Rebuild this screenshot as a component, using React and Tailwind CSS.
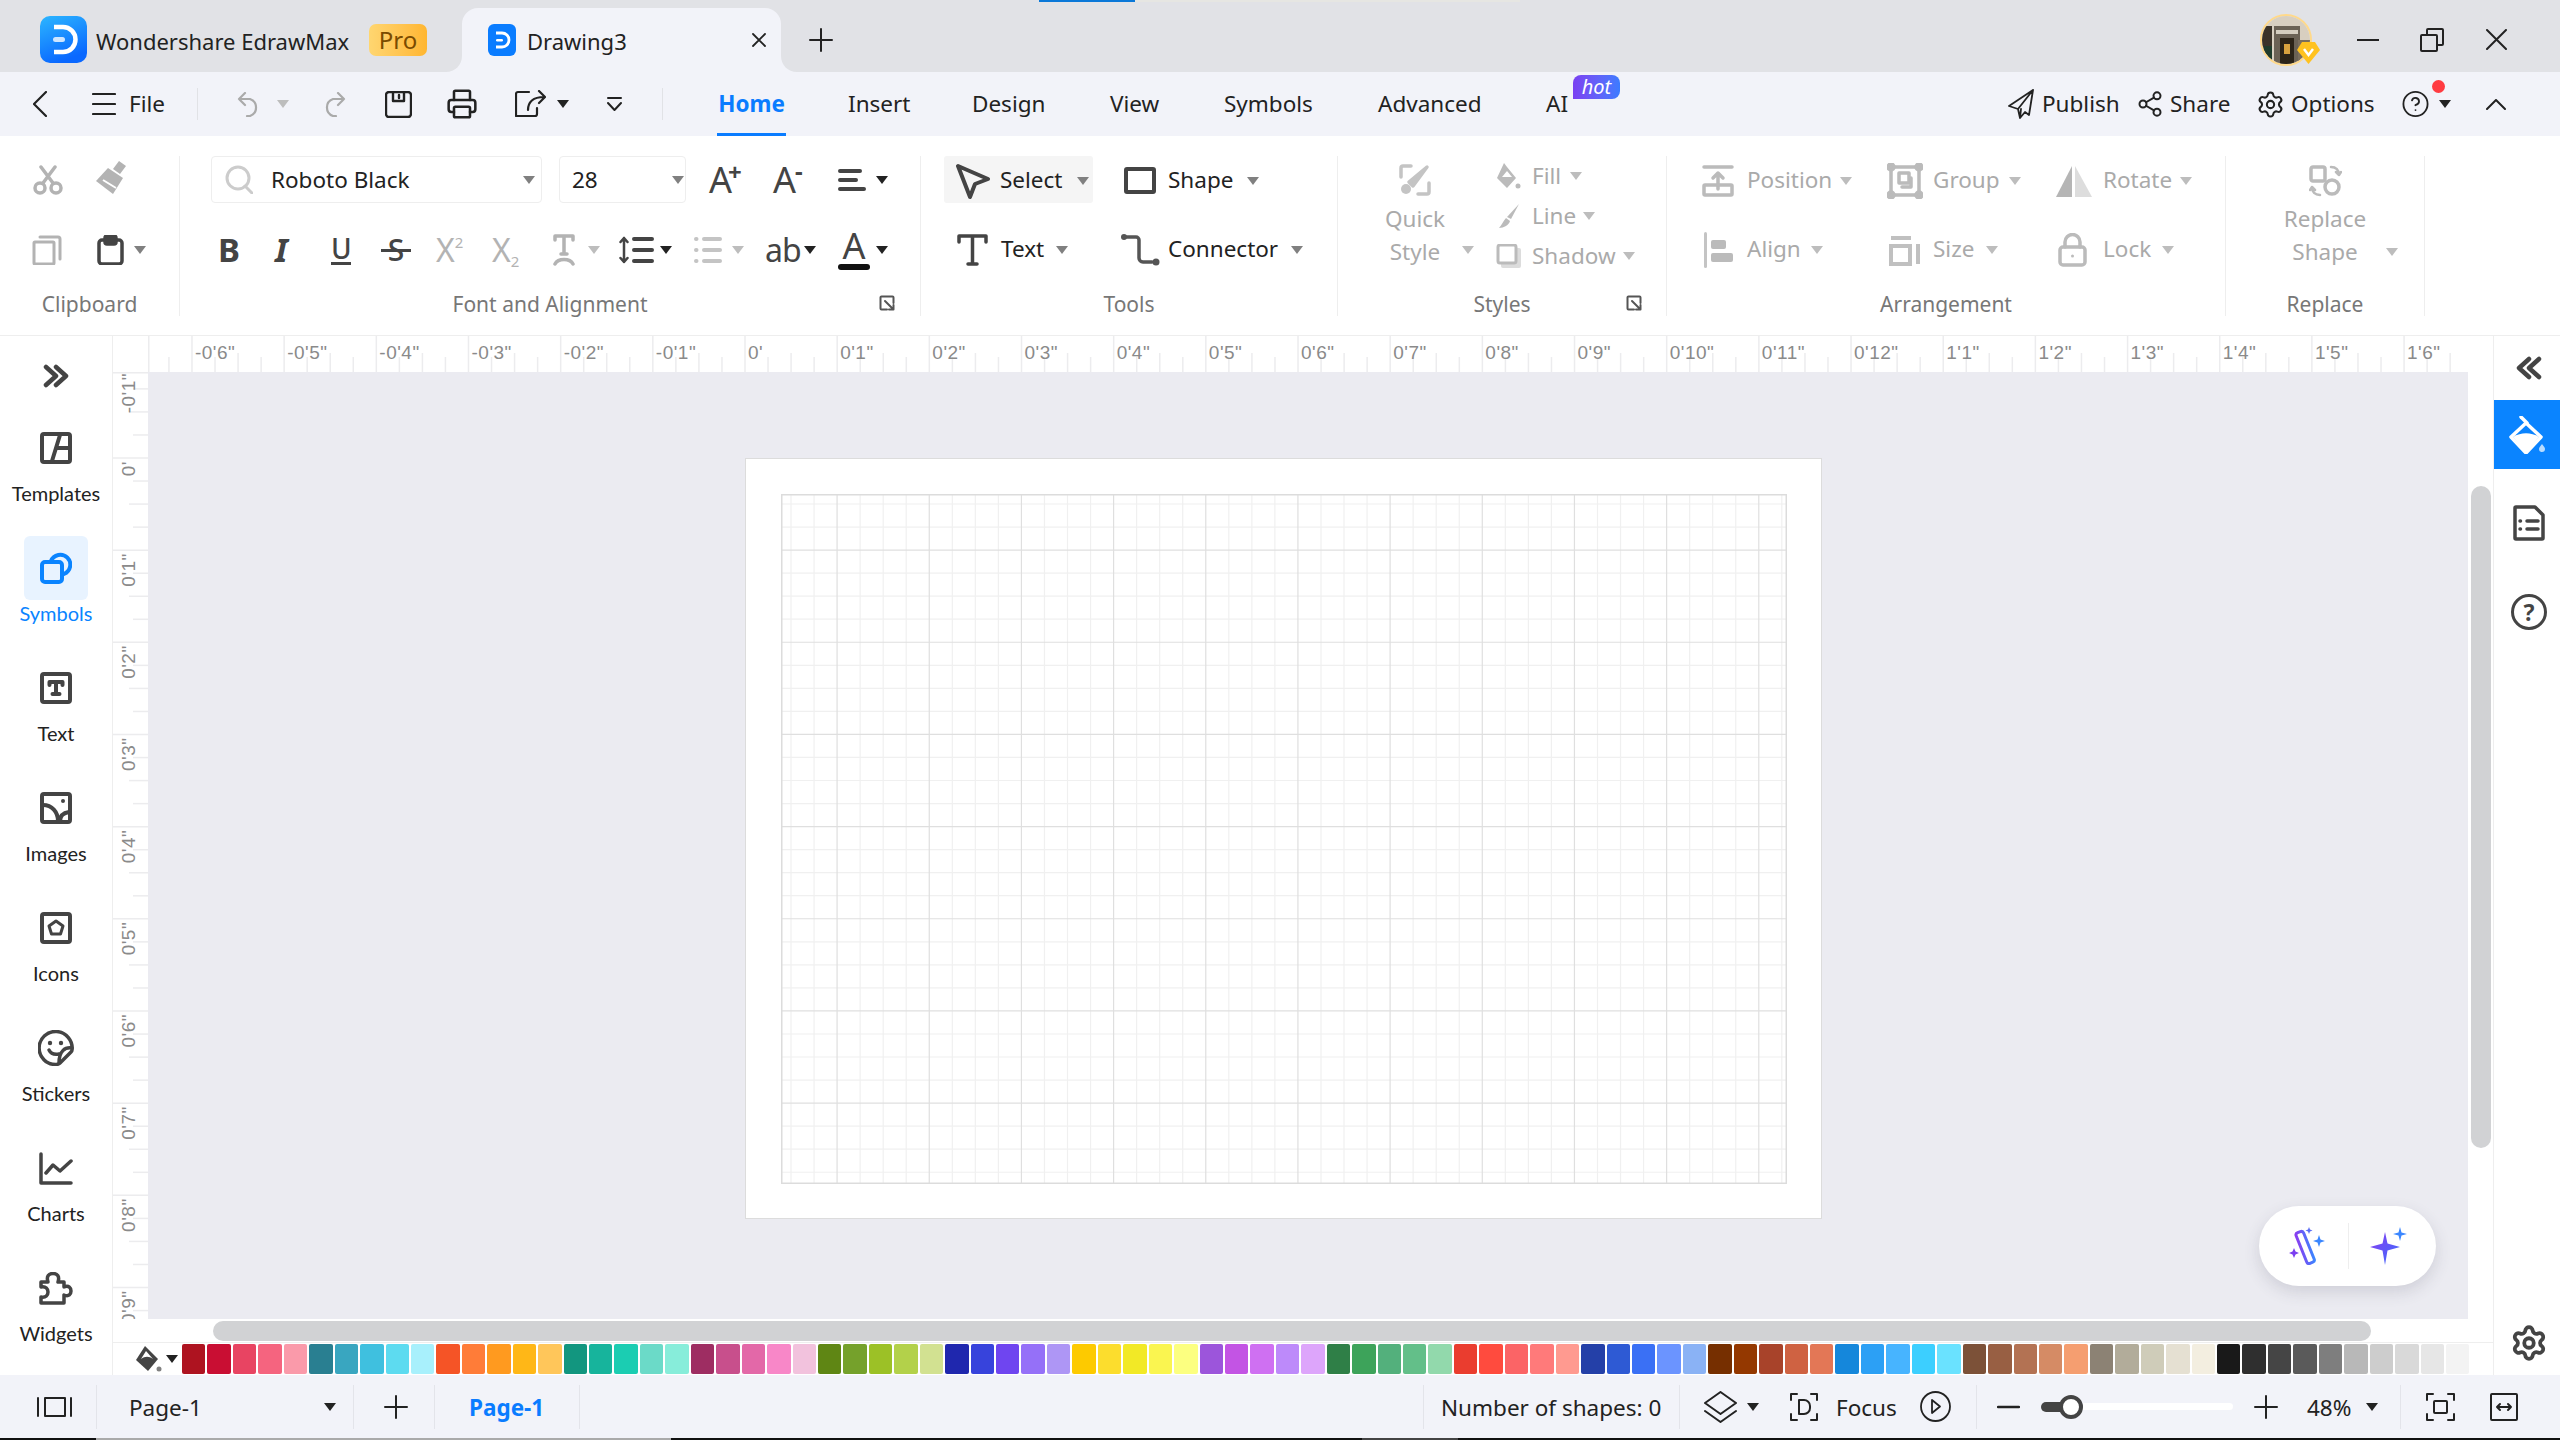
import React from 'react';
import { Settings, Share2, CircleHelp, Printer } from 'lucide-react';

const swatches = [
  'bg-[#ae1320]', 'bg-[#c90e33]', 'bg-[#e84462]', 'bg-[#f5647f]', 'bg-[#fa9aaa]',
  'bg-[#297f91]', 'bg-[#39a6c0]', 'bg-[#3fc0df]', 'bg-[#5ddbf0]', 'bg-[#a8f0fc]',
  'bg-[#f55426]', 'bg-[#ff7c38]', 'bg-[#ff9a1f]', 'bg-[#ffb717]', 'bg-[#ffc65a]',
  'bg-[#12967f]', 'bg-[#17b49c]', 'bg-[#1bcdb2]', 'bg-[#6bdac8]', 'bg-[#87edda]',
  'bg-[#9e2d62]', 'bg-[#c84f8c]', 'bg-[#e368a8]', 'bg-[#f887c8]', 'bg-[#f2c2dd]',
  'bg-[#5f8614]', 'bg-[#75a12b]', 'bg-[#9cc126]', 'bg-[#b3d14a]', 'bg-[#d2e191]',
  'bg-[#1f27ae]', 'bg-[#3743dc]', 'bg-[#6f45f0]', 'bg-[#9570f8]', 'bg-[#ae96f5]',
  'bg-[#fdca00]', 'bg-[#fcdd2d]', 'bg-[#f2e926]', 'bg-[#faf550]', 'bg-[#fcff80]',
  'bg-[#9c55db]', 'bg-[#c354e4]', 'bg-[#cf70f2]', 'bg-[#bd8afa]', 'bg-[#dda5fb]',
  'bg-[#2f7f47]', 'bg-[#3da35a]', 'bg-[#53b07c]', 'bg-[#63bf89]', 'bg-[#92d9ac]',
  'bg-[#ea3d2f]', 'bg-[#ff4b3e]', 'bg-[#fb6466]', 'bg-[#ff7a7a]', 'bg-[#ff9a90]',
  'bg-[#2440a8]', 'bg-[#2e5ad4]', 'bg-[#3a70f5]', 'bg-[#6b94ff]', 'bg-[#8ab2f5]',
  'bg-[#762f00]', 'bg-[#943800]', 'bg-[#a8432a]', 'bg-[#cf6242]', 'bg-[#e37756]',
  'bg-[#1587db]', 'bg-[#2ca0f5]', 'bg-[#47b4ff]', 'bg-[#3ccfff]', 'bg-[#6ae2ff]',
  'bg-[#7c5138]', 'bg-[#985f43]', 'bg-[#b37253]', 'bg-[#d58b65]', 'bg-[#f59e70]',
  'bg-[#8c8274]', 'bg-[#b2ac9a]', 'bg-[#cfccb9]', 'bg-[#e5e0d2]', 'bg-[#f3eee0]',
  'bg-[#191919]', 'bg-[#2f2f2f]', 'bg-[#454545]', 'bg-[#5a5a5a]', 'bg-[#7e7e7e]',
  'bg-[#b8b8b8]', 'bg-[#cdcdcd]', 'bg-[#d9d9d9]', 'bg-[#e6e6e6]', 'bg-[#f3f3f3]',
];

const PITCH = 92.17;
const ZERO_X = 745 - 148;
const ZERO_Y = 457 - 371;

const rulerLabel = (n) => {
  if (n < 0) return `-0'${-n}"`;
  if (n === 0) return "0'";
  if (n <= 12) return `0'${n}"`;
  return `1'${n - 12}"`;
};

const Svg = ({ w, h, sw = 3, className = '', children }) => (
  <svg
    width={w}
    height={h}
    viewBox={`0 0 ${w} ${h}`}
    fill="none"
    stroke="currentColor"
    strokeWidth={sw}
    strokeLinecap="round"
    strokeLinejoin="round"
    className={`shrink-0 ${className}`}
  >
    {children}
  </svg>
);

const Caret = ({ className = 'text-[#808080]' }) => (
  <svg width="12" height="8" viewBox="0 0 12 8" className={`shrink-0 ${className}`}>
    <polygon points="0,0 12,0 6,8" fill="currentColor" />
  </svg>
);

const GrayCaret = ({ className = '' }) => <Caret className={`text-[#bdbdbd] ${className}`} />;

const Divider = ({ className = '' }) => <div className={`w-px h-[44px] bg-[#e3e4ea] shrink-0 ${className}`} />;

const LogoMark = ({ size, radius }) => (
  <svg width={size} height={size} viewBox="0 0 47 47" className="shrink-0">
    <defs>
      <linearGradient id="logoGrad" x1="0" y1="0" x2="0.4" y2="1">
        <stop offset="0" stopColor="#2cb6ff" />
        <stop offset="1" stopColor="#0a68ff" />
      </linearGradient>
    </defs>
    <rect width="47" height="47" rx={radius} fill="url(#logoGrad)" />
    <path d="M14 11h9a12.500 12.500 0 0 1 0 25h-9" fill="none" stroke="#fff" strokeWidth="4.500" />
    <rect x="13" y="21" width="12" height="5" rx="2.500" fill="#cfe6ff" />
  </svg>
);

const ChevronsRight = ({ flip }) => (
  <Svg w={26} h={24} sw={4.500} className={flip ? 'rotate-180' : ''}>
    <path d="M3 3l10 9-10 9M13 3l10 9-10 9" />
  </Svg>
);

const TemplatesIcon = () => (
  <Svg w={32} h={32} sw={4}>
    <rect x="2" y="2" width="28" height="28" rx="2" />
    <path d="M20 3l-8 26M16 16h13" />
  </Svg>
);
const SymbolsIcon = () => (
  <Svg w={32} h={32} sw={4}>
    <path d="M11 9a10 10 0 1 1 13 13" />
    <rect x="2" y="10" width="20" height="20" rx="3" />
  </Svg>
);
const TextBoxIcon = () => (
  <Svg w={32} h={32} sw={4}>
    <rect x="2" y="2" width="28" height="28" rx="2" />
    <path d="M9.500 13v-3h13v3M16 10v12M12.500 22h7" />
  </Svg>
);
const ImagesIcon = () => (
  <Svg w={32} h={32} sw={4}>
    <rect x="2" y="2" width="28" height="28" rx="2" />
    <path d="M3 13c9 0 15 7 15 16M20 29c0-5 3-8 9-9" />
    <circle cx="23" cy="9" r="2" fill="currentColor" stroke="none" />
  </Svg>
);
const IconsIcon = () => (
  <Svg w={32} h={32} sw={4}>
    <rect x="2" y="2" width="28" height="28" rx="2" />
    <path d="M16 9l7 5-2.500 8h-9L9 14z" strokeWidth="3" />
  </Svg>
);
const StickersIcon = () => (
  <Svg w={36} h={36} sw={3.500}>
    <path d="M34 20A16.500 16.500 0 1 0 18 34.500c2 0 3-.5 4-1.500l11-11c.7-.7 1-1 1-2z" />
    <path d="M34 18c-7-1-13 3-13 15" />
    <path d="M11 20c2 4 5 5 10 4" />
    <circle cx="12" cy="13" r="2.200" fill="currentColor" stroke="none" />
    <circle cx="23" cy="13" r="2.200" fill="currentColor" stroke="none" />
  </Svg>
);
const ChartsIcon = () => (
  <Svg w={34} h={33} sw={3.500}>
    <path d="M2 2v29h30M7 21l7-8 7 6 11-10" />
  </Svg>
);
const WidgetsIcon = () => (
  <Svg w={34} h={33} sw={3.500}>
    <path d="M2 10h7C7 4 10 1.500 14 1.500S21 4 19 10h6v5c5-2 7 1 7 4s-2 6-7 4v8H2v-6c5 1 7-2 7-5s-2-6-7-5z" />
  </Svg>
);

const SideItem = ({ icon, label, active }) => (
  <div className="flex flex-col items-center h-[120px] shrink-0">
    <div className={`w-[64px] h-[64px] rounded-[6px] flex items-center justify-center ${active ? 'bg-[#e8f3ff] text-[#0a84ff]' : 'text-[#444]'}`}>
      {icon}
    </div>
    <div className={`mt-[1px] h-[24px] leading-[24px] text-[20px] font-['Lato',sans-serif] whitespace-nowrap ${active ? 'text-[#0a84ff]' : 'text-[#222]'}`}>
      {label}
    </div>
  </div>
);

const HRuler = () => {
  const ticks = [];
  for (let i = -6 * 4 - 1; i <= 19 * 4; i++) {
    const x = ZERO_X + (i * PITCH) / 4;
    const k = ((i % 4) + 4) % 4;
    const y1 = k === 0 ? 0 : k === 2 ? 17 : 21;
    ticks.push(<line key={i} x1={x} x2={x} y1={y1} y2={36} stroke="#ececee" strokeWidth="1.500" />);
  }
  const labels = [];
  for (let n = -6; n <= 18; n++) {
    labels.push(
      <text key={n} x={ZERO_X + n * PITCH + 3} y={23} fontSize="19" letterSpacing="0.5" fill="#8a8a8a" fontFamily="Liberation Sans, sans-serif">
        {rulerLabel(n)}
      </text>
    );
  }
  return (
    <svg width="2320" height="36" className="shrink-0 block">
      <line x1="0.750" x2="0.750" y1="0" y2="36" stroke="#ececee" strokeWidth="1.500" />
      {ticks}
      {labels}
    </svg>
  );
};

const VRuler = () => {
  const ticks = [];
  for (let i = -4; i <= 40; i++) {
    const y = ZERO_Y + (i * PITCH) / 4;
    const k = ((i % 4) + 4) % 4;
    const x1 = k === 0 ? 0 : k === 2 ? 16 : 20;
    ticks.push(<line key={i} x1={x1} x2={35} y1={y} y2={y} stroke="#ececee" strokeWidth="1.500" />);
  }
  const labels = [];
  for (let n = -1; n <= 9; n++) {
    const y = Math.max(ZERO_Y + n * PITCH + 3, 1);
    labels.push(
      <text key={n} x={0} y={0} transform={`translate(22 ${y}) rotate(-90)`} textAnchor="end" fontSize="19" letterSpacing="0.5" fill="#8a8a8a" fontFamily="Liberation Sans, sans-serif">
        {rulerLabel(n)}
      </text>
    );
  }
  return (
    <svg width="35" height="947" className="shrink-0 block">
      <line x1="0" x2="35" y1="0.750" y2="0.750" stroke="#ececee" strokeWidth="1.500" />
      {ticks}
      {labels}
    </svg>
  );
};

const PageGrid = () => {
  const w = 1006;
  const h = 690;
  const minor = [];
  const major = [];
  for (let i = 0; i < 46; i++) {
    const p = 10 + (i * PITCH) / 4;
    const isMajor = (i - 2) % 4 === 0;
    if (p < w) (isMajor ? major : minor).push(<line key={`v${i}`} x1={p} x2={p} y1={0} y2={h} />);
    if (p < h) (isMajor ? major : minor).push(<line key={`h${i}`} x1={0} x2={w} y1={p} y2={p} />);
  }
  return (
    <svg width={w} height={h} className="block">
      <g stroke="#f0f0f0" strokeWidth="1.200">{minor}</g>
      <g stroke="#dfdfdf" strokeWidth="1.200">{major}</g>
      <rect x="0.750" y="0.750" width={w - 1.500} height={h - 1.500} fill="none" stroke="#dcdcdc" strokeWidth="1.500" />
    </svg>
  );
};

const Group = ({ w, label, children }) => (
  <div className={`flex flex-col h-[160px] border-r border-[#eeeeee] shrink-0 relative ${w}`}>
    <div className="h-[118px] shrink-0">{children}</div>
    <div className="mt-auto h-[24px] leading-[24px] text-center text-[21px] text-[#777]">{label}</div>
  </div>
);

const Launcher = ({ className = '' }) => (
  <Svg w={16} h={16} sw={2} className={`absolute bottom-[5px] text-[#555] ${className}`}>
    <path d="M8 14.500H2.500a1 1 0 0 1-1-1V2.500a1 1 0 0 1 1-1h11a1 1 0 0 1 1 1V8M6 6l8 8M14.500 10v4.500H10" />
  </Svg>
);

const Row = ({ className = '', children }) => (
  <div className={`flex items-center h-[47px] ${className}`}>{children}</div>
);

const ClipboardGroup = () => (
  <Group w="w-[180px]" label="Clipboard">
    <Row className="text-[#b3b3b3]">
      <Svg w={32} h={30} sw={3.500} className="ml-[32px]">
        <circle cx="8" cy="23" r="5" />
        <circle cx="24" cy="23" r="5" />
        <path d="M11 18L23 2M21 18L9 2" />
      </Svg>
      <svg width="33" height="34" viewBox="0 0 33 34" className="ml-[30px] shrink-0 -mt-[4px]">
        <path d="M25 0l7 5-6 8-7-5z" fill="currentColor" />
        <path d="M14 7l15 10-10 16L2 20z" fill="currentColor" />
        <path d="M9 19l13 8" stroke="#fff" strokeWidth="2" />
      </svg>
    </Row>
    <Row className="mt-[23px] text-[#b3b3b3]">
      <Svg w={30} h={30} sw={3} className="ml-[32px]">
        <rect x="2" y="7" width="20" height="22" rx="1" />
        <path d="M8 2h18a2 2 0 0 1 2 2v20" />
      </Svg>
      <Svg w={27} h={30} sw={3.500} className="ml-[35px] text-[#444]">
        <rect x="2" y="5" width="23" height="24" rx="3" />
        <rect x="8" y="1" width="11" height="8" rx="2" fill="currentColor" />
      </Svg>
      <Caret className="ml-[10px] text-[#808080]" />
    </Row>
  </Group>
);

const FontGroup = () => (
  <Group w="w-[741px]" label="Font and Alignment">
    <Row>
      <div className="ml-[31px] w-[331px] h-[47px] border border-[#eeeeee] rounded-[4px] flex items-center shrink-0">
        <Svg w={28} h={29} sw={3} className="ml-[13px] text-[#cccccc]">
          <circle cx="13" cy="13" r="11" />
          <path d="M20 21l7 7" />
        </Svg>
        <span className="ml-[18px] w-[252px] pt-[2px] text-[#222]">Roboto Black</span>
        <Caret />
      </div>
      <div className="ml-[17px] w-[127px] h-[47px] border border-[#eeeeee] rounded-[4px] flex items-center shrink-0">
        <span className="ml-[12px] w-[100px] pt-[2px] text-[#222]">28</span>
        <Caret />
      </div>
      <div className="ml-[23px] w-[33px] flex items-start text-[#444]">
        <span className="text-[36px] leading-none">A</span>
        <span className="text-[24px] leading-none font-bold -ml-[4px] -mt-[2px]">+</span>
      </div>
      <div className="ml-[31px] w-[32px] flex items-start text-[#444]">
        <span className="text-[36px] leading-none">A</span>
        <span className="text-[24px] leading-none font-bold -ml-[1px] -mt-[3px]">-</span>
      </div>
      <Svg w={28} h={24} sw={4} className="ml-[33px] text-[#444]">
        <path d="M2 3h20M2 12h16M2 21h24" />
      </Svg>
      <Caret className="ml-[10px]" />
    </Row>
    <Row className="mt-[23px]">
      <span className="ml-[38px] w-[22px] text-[33px] font-bold text-[#444]">B</span>
      <span className="ml-[35px] w-[20px] text-[33px] font-bold italic text-[#444]">I</span>
      <span className="ml-[36px] w-[20px] text-[28px] font-medium text-[#444] border-b-[3px] border-[#444] leading-[28px] text-center">U</span>
      <span className="ml-[30px] w-[30px] text-[30px] font-medium text-[#444] text-center relative">
        S
        <span className="absolute left-0 right-0 top-[14px] h-[3px] bg-[#444]" />
      </span>
      <span className="ml-[25px] w-[34px] text-[32px] text-[#b3b3b3] whitespace-nowrap">X<sup className="text-[15px] -top-[14px]">2</sup></span>
      <span className="ml-[22px] w-[34px] text-[32px] text-[#b3b3b3] whitespace-nowrap">X<sub className="text-[15px] -bottom-[5px]">2</sub></span>
      <Svg w={22} h={32} sw={3.500} className="ml-[27px] text-[#b3b3b3]">
        <path d="M2 6V2h18v4M11 2v18M8 20h6M2 30c3-6 15-6 18 0" />
      </Svg>
      <GrayCaret className="ml-[13px]" />
      <Svg w={36} h={30} sw={4} className="ml-[18px] text-[#444]">
        <path d="M16 4h18M16 15h18M16 26h18" />
        <path d="M6 3v24M2.500 7L6 3l3.500 4M2.500 23L6 27l3.500-4" strokeWidth="2.500" />
      </Svg>
      <Caret className="ml-[6px]" />
      <Svg w={28} h={30} sw={4} className="ml-[22px] text-[#c4c4c4]">
        <path d="M10 4h16M10 15h16M10 26h16M2 4h.5M2 15h.5M2 26h.5" />
      </Svg>
      <GrayCaret className="ml-[10px]" />
      <span className="ml-[21px] w-[33px] text-[32px] text-[#444] tracking-[-1px]">ab</span>
      <Caret className="ml-[6px]" />
      <div className="ml-[22px] w-[32px] flex flex-col items-center text-[#444]">
        <span className="text-[36px] leading-[32px]">A</span>
        <div className="w-[32px] h-[6px] rounded-[3px] bg-[#111] mt-[2px]" />
      </div>
      <Caret className="ml-[6px]" />
    </Row>
    <Launcher className="left-[699px]" />
  </Group>
);

const ToolsGroup = () => (
  <Group w="w-[417px]" label="Tools">
    <Row>
      <div className="ml-[23px] w-[149px] h-[47px] bg-[#f5f5f5] rounded-[3px] flex items-center shrink-0 pt-[2px]">
        <Svg w={36} h={36} sw={4} className="ml-[11px] text-[#444]">
          <path d="M3 3l30 13-13 5-5 13z" />
        </Svg>
        <span className="ml-[9px] w-[77px]">Select</span>
        <Caret />
      </div>
      <div className="flex items-center pt-[2px]">
        <Svg w={32} h={27} sw={4} className="ml-[31px] text-[#444]">
          <rect x="2" y="2" width="28" height="23" rx="1" />
        </Svg>
        <span className="ml-[12px] w-[79px]">Shape</span>
        <Caret />
      </div>
    </Row>
    <Row className="mt-[23px]">
      <Svg w={31} h={32} sw={3.500} className="ml-[36px] text-[#444]">
        <path d="M2 8V2h27v6M15.500 2v28M11 30h9" />
      </Svg>
      <span className="ml-[13px] w-[55px]">Text</span>
      <Caret />
      <Svg w={40} h={33} sw={3.500} className="ml-[52px] text-[#555]">
        <circle cx="4" cy="4" r="3" fill="currentColor" stroke="none" />
        <circle cx="36" cy="29" r="3.500" fill="currentColor" stroke="none" />
        <path d="M6 4h10a3 3 0 0 1 3 3v18a4 4 0 0 0 4 4h9" />
      </Svg>
      <span className="ml-[8px] w-[123px]">Connector</span>
      <Caret />
    </Row>
  </Group>
);

const GrayLine = ({ icon, label, textW }) => (
  <div className="flex items-center h-[40px] text-[#aaaaaa]">
    <div className="w-[26px] flex justify-center text-[#bbbbbb]">{icon}</div>
    <span className={`ml-[11px] ${textW}`}>{label}</span>
    <GrayCaret />
  </div>
);

const StylesGroup = () => (
  <Group w="w-[329px]" label="Styles">
    <div className="flex h-[118px]">
      <div className="ml-[47px] w-[60px] flex flex-col items-center text-[#aaaaaa]">
        <Svg w={32} h={32} sw={3.500} className="mt-[8px] text-[#c4c4c4]">
          <path d="M12 2H4a2 2 0 0 0-2 2v9M30 19v9a2 2 0 0 1-2 2h-9" />
          <path d="M28 3L14 22l-4-4z" fill="currentColor" />
          <circle cx="7" cy="25" r="5" fill="currentColor" stroke="none" />
        </Svg>
        <span className="mt-[7px] h-[32px] leading-[32px]">Quick</span>
        <span className="mt-[1px] h-[32px] leading-[32px]">Style</span>
      </div>
      <GrayCaret className="ml-[17px] mt-[90px]" />
      <div className="ml-[21px]">
        <GrayLine
          textW="w-[38px]"
          label="Fill"
          icon={
            <svg width="25" height="28" viewBox="0 0 25 28" className="shrink-0">
              <path d="M8 1l3 4 9 11-9 10L1 16z" fill="currentColor" />
              <path d="M6 15l5-6 5 6z" fill="#fff" />
              <circle cx="22" cy="24" r="2.500" fill="currentColor" />
            </svg>
          }
        />
        <GrayLine
          textW="w-[51px]"
          label="Line"
          icon={
            <svg width="25" height="24" viewBox="0 0 25 24" className="shrink-0">
              <path d="M23 0l-8 15-4-2z" fill="currentColor" />
              <path d="M10 14l4 3c-1 4-6 7-11 7 3-3 4-7 7-10z" fill="currentColor" />
            </svg>
          }
        />
        <GrayLine
          textW="w-[91px]"
          label="Shadow"
          icon={
            <svg width="25" height="24" viewBox="0 0 25 24" className="shrink-0">
              <rect x="5" y="4" width="20" height="20" rx="2" fill="#dcdcdc" />
              <rect x="2" y="1" width="18" height="18" rx="2" fill="#fff" stroke="currentColor" strokeWidth="3" />
            </svg>
          }
        />
      </div>
    </div>
    <Launcher className="left-[288px]" />
  </Group>
);

const ArrangementGroup = () => (
  <Group w="w-[559px]" label="Arrangement">
    <Row className="text-[#aaaaaa] pt-[2px]">
      <Svg w={32} h={32} sw={3.500} className="ml-[35px] text-[#bbbbbb]">
        <path d="M2 2h28M16 24V8M11 13l5-5 5 5" />
        <rect x="2" y="20" width="28" height="10" rx="1" />
      </Svg>
      <span className="ml-[13px] w-[93px]">Position</span>
      <GrayCaret />
      <Svg w={36} h={36} sw={3.500} className="ml-[35px] text-[#bbbbbb]">
        <rect x="4" y="4" width="28" height="28" rx="1" />
        <rect x="12" y="10" width="10" height="10" />
        <path d="M15 24h9v-9" />
        <circle cx="4" cy="4" r="3" fill="currentColor" />
        <circle cx="32" cy="4" r="3" fill="currentColor" />
        <circle cx="4" cy="32" r="3" fill="currentColor" />
        <circle cx="32" cy="32" r="3" fill="currentColor" />
      </Svg>
      <span className="ml-[10px] w-[76px]">Group</span>
      <GrayCaret />
      <svg width="36" height="32" viewBox="0 0 36 32" className="ml-[35px] shrink-0">
        <polygon points="16,1 16,32 0,32" fill="#b5b5b5" />
        <polygon points="19,1 36,32 19,32" fill="#dddddd" />
      </svg>
      <span className="ml-[11px] w-[77px]">Rotate</span>
      <GrayCaret />
    </Row>
    <Row className="mt-[23px] text-[#aaaaaa]">
      <svg width="29" height="36" viewBox="0 0 29 36" className="ml-[37px] shrink-0">
        <rect x="0" y="0" width="3" height="36" rx="1.500" fill="#c4c4c4" />
        <rect x="7" y="8" width="15" height="9" rx="2" fill="#bbbbbb" />
        <rect x="7" y="21" width="22" height="9" rx="2" fill="#bbbbbb" />
      </svg>
      <span className="ml-[14px] w-[64px]">Align</span>
      <GrayCaret />
      <svg width="32" height="32" viewBox="0 0 32 32" className="ml-[66px] shrink-0" fill="none" stroke="#c0c0c0">
        <path d="M2 4h20" strokeWidth="4" />
        <rect x="2" y="12" width="19" height="18" strokeWidth="4" />
        <path d="M29 10v20" strokeWidth="4" />
      </svg>
      <span className="ml-[12px] w-[53px]">Size</span>
      <GrayCaret />
      <Svg w={29} h={34} sw={3.500} className="ml-[60px] text-[#bbbbbb]">
        <rect x="2" y="14" width="25" height="18" rx="3" />
        <path d="M7 14V9a7.500 7.500 0 0 1 15 0v5" />
        <circle cx="14.500" cy="23" r="1.500" fill="currentColor" stroke="none" />
      </Svg>
      <span className="ml-[16px] w-[59px]">Lock</span>
      <GrayCaret />
    </Row>
  </Group>
);

const ReplaceGroup = () => (
  <Group w="w-[199px]" label="Replace">
    <div className="flex flex-col items-center text-[#aaaaaa]">
      <Svg w={33} h={32} sw={3.500} className="mt-[9px] text-[#bbbbbb]">
        <rect x="2" y="2" width="14" height="14" rx="2" />
        <circle cx="23" cy="22" r="7" />
        <path d="M22 2c5 0 8 3 8 8M27 7l3 3 2-3M11 30c-5 0-8-3-8-8M6 25l-3-3-2 3" strokeWidth="2.500" />
      </Svg>
      <span className="mt-[6px] h-[32px] leading-[32px]">Replace</span>
      <div className="mt-[1px] grid grid-cols-[1fr_auto_1fr] w-full items-center h-[32px]">
        <span />
        <span>Shape</span>
        <GrayCaret className="ml-[28px]" />
      </div>
    </div>
  </Group>
);

const PillIcons = () => (
  <div className="absolute right-[32px] bottom-[33px] w-[177px] h-[80px] rounded-[40px] bg-white shadow-[0_6px_16px_rgba(60,60,90,0.16)] flex items-center">
    <svg width="38" height="38" viewBox="0 0 38 38" className="ml-[30px] shrink-0">
      <defs>
        <linearGradient id="magicGrad" x1="0" y1="0" x2="1" y2="1">
          <stop offset="0" stopColor="#8a3cf0" />
          <stop offset="1" stopColor="#3a86ff" />
        </linearGradient>
      </defs>
      <rect x="12" y="4" width="8" height="33" rx="2.500" transform="rotate(-22 16 20)" fill="none" stroke="url(#magicGrad)" strokeWidth="3" />
      <path d="M5 21l1.500 3.500L10 26l-3.500 1.500L5 31l-1.500-3.500L0 26l3.500-1.500z" fill="#7b3ff0" />
      <path d="M30 8l1.500 4.500L36 14l-4.500 1.500L30 20l-1.500-4.500L24 14l4.500-1.500z" fill="#3a86ff" />
      <path d="M20 0l1 2.500 2.500 1-2.500 1L20 7l-1-2.500-2.500-1 2.500-1z" fill="#5a6cf5" />
    </svg>
    <div className="ml-[21px] w-px h-[46px] bg-[#eeeeee] shrink-0" />
    <svg width="38" height="38" viewBox="0 0 38 38" className="ml-[21px] shrink-0">
      <defs>
        <linearGradient id="starGrad" x1="0" y1="0" x2="1" y2="1">
          <stop offset="0" stopColor="#8a3cf0" />
          <stop offset="1" stopColor="#3a70ff" />
        </linearGradient>
      </defs>
      <path d="M15 5l2.500 11.500L30 20l-12.500 3.500L15 38l-2.500-14.500L0 20l12.500-3.500z" fill="url(#starGrad)" />
      <path d="M30 0l1.500 5.500L37 7l-5.500 1.500L30 14l-1.500-5.500L23 7l5.500-1.500z" fill="#3a86ff" />
    </svg>
  </div>
);

export default function App() {
  return (
    <div className="w-[2560px] h-[1440px] overflow-hidden flex flex-col bg-white text-[22.5px] leading-none text-[#222] font-['Noto_Sans',sans-serif]">
      {/* window strip and tabs */}
      <div className="h-[72px] bg-[#e1e2e6] shrink-0 flex flex-col">
        <div className="h-[2px] flex shrink-0">
          <div className="ml-[1039px] w-[96px] bg-[#0a78d8]" />
          <div className="w-[385px] bg-[#e6e6e2]" />
        </div>
        <div className="h-[70px] flex items-center pt-[5px]">
          <div className="ml-[40px] flex">
            <LogoMark size={47} radius={10} />
          </div>
          <span className="ml-[9px] w-[256px] pt-[2px] whitespace-nowrap text-[22px]">Wondershare EdrawMax</span>
          <div className="ml-[17px] w-[58px] h-[32px] rounded-[7px] bg-gradient-to-r from-[#ffd670] to-[#ffb62f] flex items-center justify-center text-[24px] text-[#7a4b00] shrink-0">Pro</div>
          <div className="ml-[35px] w-[319px] h-[64px] self-end bg-[#f2f3f9] rounded-t-[16px] flex items-center shrink-0 relative">
            <svg width="16" height="16" viewBox="0 0 16 16" className="absolute -left-[16px] bottom-0">
              <path d="M16 0v16H0c9 0 16-7 16-16z" fill="#f2f3f9" />
            </svg>
            <svg width="16" height="16" viewBox="0 0 16 16" className="absolute -right-[16px] bottom-0">
              <path d="M0 0v16h16C7 16 0 9 0 0z" fill="#f2f3f9" />
            </svg>
            <div className="ml-[26px] w-[28px] h-[32px] rounded-[6px] bg-[#0a7cff] flex items-center justify-center shrink-0">
              <svg width="18" height="20" viewBox="0 0 18 20">
                <path d="M3 3h6a7 7 0 0 1 0 14H3" fill="none" stroke="#fff" strokeWidth="2.800" />
                <rect x="3" y="9" width="7" height="2.500" rx="1.200" fill="#fff" />
              </svg>
            </div>
            <span className="ml-[11px] w-[225px] pt-[2px] whitespace-nowrap text-[22px]">Drawing3</span>
            <Svg w={14} h={14} sw={1.800} className="text-[#222]">
              <path d="M1 1l12 12M13 1L1 13" />
            </Svg>
          </div>
          <Svg w={24} h={24} sw={2} className="ml-[28px] text-[#222]">
            <path d="M12 1v22M1 12h22" />
          </Svg>
          <div className="ml-[1427px] w-[52px] h-[52px] rounded-full border-[2px] border-[#ffd98a] relative shrink-0">
            <svg width="48" height="48" viewBox="0 0 48 48" className="rounded-full block">
              <rect width="48" height="48" fill="#d8cfc0" />
              <rect x="0" y="10" width="10" height="38" fill="#3a3228" />
              <rect x="12" y="10" width="26" height="38" fill="#6b6255" />
              <rect x="18" y="22" width="14" height="26" fill="#2c2418" />
              <rect x="22" y="28" width="6" height="10" fill="#d7a13e" />
              <rect x="14" y="14" width="22" height="4" fill="#d4cdbf" />
              <rect x="2" y="30" width="8" height="18" fill="#1f3b2b" />
              <rect x="36" y="24" width="12" height="24" fill="#7a6e5d" />
            </svg>
            <svg width="25" height="24" viewBox="0 0 25 24" className="absolute -right-[11px] bottom-[-1px]">
              <path d="M6 1h13l5 8-11.500 14L1 9z" fill="#ffc21f" />
              <path d="M8 8l4.500 6L17 8" fill="none" stroke="#fff" strokeWidth="2.500" />
            </svg>
          </div>
          <Svg w={22} h={4} sw={2} className="ml-[45px] text-[#222]">
            <path d="M0 2h22" />
          </Svg>
          <Svg w={24} h={24} sw={2} className="ml-[41px] text-[#222]">
            <rect x="1" y="7" width="16" height="16" rx="1" />
            <path d="M7 7V2a1 1 0 0 1 1-1h14a1 1 0 0 1 1 1v14a1 1 0 0 1-1 1h-5" />
          </Svg>
          <Svg w={21} h={21} sw={2} className="ml-[42px] text-[#222]">
            <path d="M1 1l19 19M20 1L1 20" />
          </Svg>
        </div>
      </div>

      {/* menu bar */}
      <div className="h-[64px] bg-[#f2f3f9] shrink-0 flex items-center">
        <Svg w={14} h={26} sw={2.200} className="ml-[33px] text-[#222]">
          <path d="M13 1L1 13l12 12" />
        </Svg>
        <Svg w={24} h={24} sw={2.200} className="ml-[45px] text-[#222]">
          <path d="M1 2h22M1 12h22M1 22h22" />
        </Svg>
        <span className="ml-[13px] w-[36px]">File</span>
        <div className="ml-[32px] w-px h-[32px] bg-[#e1e2e6] shrink-0" />
        <Svg w={25} h={25} sw={2.200} className="ml-[39px] text-[#aaaaaa]">
          <path d="M8 1L2 7l6 6M2 7h11a9 9 0 0 1 0 17h-3" />
        </Svg>
        <GrayCaret className="ml-[15px]" />
        <Svg w={24} h={25} sw={2.200} className="ml-[33px] text-[#aaaaaa]">
          <path d="M16 1l6 6-6 6M22 7H11a9 9 0 0 0 0 17h3" />
        </Svg>
        <Svg w={27} h={27} sw={2.400} className="ml-[39px] text-[#222]">
          <rect x="1" y="1" width="25" height="25" rx="3" />
          <path d="M8 1v9h11V1M14 4v3" />
        </Svg>
        <div className="ml-[34px] w-[32px] flex justify-center text-[#222]">
          <Printer size={32} strokeWidth={1.900} />
        </div>
        <Svg w={31} h={28} sw={2.200} className="ml-[37px] text-[#222]">
          <path d="M14 2H3a2 2 0 0 0-2 2v22h19a2 2 0 0 0 2-2v-6M13 20c0-8 5-13 16-13M24 1l6 6-6 6" />
        </Svg>
        <Caret className="ml-[11px]" />
        <Svg w={15} h={15} sw={2} className="ml-[38px] text-[#222]">
          <path d="M1 1h13M1 6l6.500 7L14 6" />
        </Svg>
        <div className="ml-[40px] w-px h-[32px] bg-[#e1e2e6] shrink-0" />
        <div className="ml-[54px] w-[69px] h-full flex items-center justify-center border-b-[3px] border-t-[3px] border-t-transparent border-[#0a7cff] font-bold text-[#0a7cff] shrink-0">Home</div>
        <span className="ml-[62px] w-[124px]">Insert</span>
        <span className="w-[138px]">Design</span>
        <span className="w-[114px]">View</span>
        <span className="w-[154px]">Symbols</span>
        <span className="w-[168px]">Advanced</span>
        <div className="w-[462px] relative shrink-0">
          <span>AI</span>
          <span className="absolute left-[27px] -top-[18px] w-[47px] h-[24px] rounded-[8px] rounded-bl-none bg-gradient-to-r from-[#7a3ff2] to-[#3a7bff] text-white text-[20px] italic flex items-center justify-center">hot</span>
        </div>
        <Svg w={26} h={30} sw={1.800} className="text-[#222]">
          <path d="M25 1L1 17l9 3 2 9 5-6 4 3zM25 1L10 20M12 29l1-9" />
        </Svg>
        <span className="ml-[8px] w-[74px]">Publish</span>
        <div className="ml-[20px] w-[28px] flex justify-center text-[#222]">
          <Share2 size={30} strokeWidth={1.700} />
        </div>
        <span className="ml-[6px] w-[59px]">Share</span>
        <div className="ml-[27px] w-[29px] flex justify-center text-[#222]">
          <Settings size={31} strokeWidth={1.700} />
        </div>
        <span className="ml-[6px] w-[83px]">Options</span>
        <div className="ml-[27px] w-[29px] flex justify-center text-[#222] relative">
          <CircleHelp size={32} strokeWidth={1.500} />
          <span className="absolute -right-[15px] -top-[8px] w-[13px] h-[13px] rounded-full bg-[#ff3b41]" />
        </div>
        <Caret className="ml-[9px]" />
        <Svg w={20} h={11} sw={2} className="ml-[35px] text-[#222]">
          <path d="M1 10l9-9 9 9" />
        </Svg>
      </div>

      {/* ribbon */}
      <div className="h-[199px] bg-white shrink-0 flex pt-[20px]">
        <ClipboardGroup />
        <FontGroup />
        <ToolsGroup />
        <StylesGroup />
        <ArrangementGroup />
        <ReplaceGroup />
      </div>

      {/* workspace */}
      <div className="flex-1 min-h-0 flex border-t border-[#eeeeee]">
        <div className="w-[113px] h-[1039px] shrink-0 border-r border-[#eeeeee] flex flex-col">
          <div className="h-[80px] shrink-0 flex items-center justify-center text-[#444]">
            <ChevronsRight />
          </div>
          <SideItem icon={<TemplatesIcon />} label="Templates" />
          <SideItem icon={<SymbolsIcon />} label="Symbols" active />
          <SideItem icon={<TextBoxIcon />} label="Text" />
          <SideItem icon={<ImagesIcon />} label="Images" />
          <SideItem icon={<IconsIcon />} label="Icons" />
          <SideItem icon={<StickersIcon />} label="Stickers" />
          <SideItem icon={<ChartsIcon />} label="Charts" />
          <SideItem icon={<WidgetsIcon />} label="Widgets" />
        </div>

        <div className="w-[2380px] shrink-0 flex flex-col min-h-0">
          <div className="h-[36px] shrink-0 flex pl-[35px]">
            <HRuler />
          </div>
          <div className="h-[947px] shrink-0 flex">
            <VRuler />
            <div className="w-[2320px] shrink-0 bg-[#ebebf1] relative overflow-hidden">
              <div className="ml-[597px] mt-[86px] w-[1077px] h-[761px] bg-white border-[1.500px] border-[#dcdcdc] pl-[34.500px] pt-[34.500px]">
                <PageGrid />
              </div>
              <PillIcons />
            </div>
            <div className="w-[25px] shrink-0 bg-white">
              <div className="ml-[3px] mt-[114px] w-[20px] h-[662px] rounded-full bg-[#d1d2d4]" />
            </div>
          </div>
          <div className="h-[24px] shrink-0 bg-white border-b border-[#eeeeee] pt-[2px]">
            <div className="ml-[100px] w-[2158px] h-[20px] rounded-full bg-[#d1d2d4]" />
          </div>
          <div className="flex-1 flex items-center">
            <svg width="26" height="26" viewBox="0 0 26 26" className="ml-[23px] shrink-0 text-[#444]">
              <path d="M9 0l3 3 10 10-10 12L0 14z" fill="currentColor" />
              <path d="M5 13c4-3 8-3 12 0L10 5z" fill="#fff" />
              <circle cx="23" cy="23" r="2.500" fill="#808080" />
            </svg>
            <Caret className="ml-[4px]" />
            <div className="ml-[4px] w-[2288px] h-[30px] flex gap-[2px]">
              {swatches.map((c, i) => (
                <div key={i} className={`flex-1 rounded-[2px] ${c}`} />
              ))}
            </div>
          </div>
        </div>

        <div className="flex-1 border-l border-[#eeeeee] flex flex-col text-[#444] pl-[4px]">
          <div className="h-[64px] flex items-center justify-center">
            <ChevronsRight flip />
          </div>
          <div className="h-[69px] -ml-[4px] bg-[#0a84ff] flex items-center justify-center">
            <svg width="36" height="38" viewBox="0 0 36 38">
              <path d="M12 1l6 6" stroke="#fff" strokeWidth="3.500" strokeLinecap="round" />
              <path d="M17 7L2 21l15 16 15-16z" fill="#0a84ff" stroke="#fff" strokeWidth="3.500" strokeLinejoin="round" />
              <path d="M4 21c8-5 18-5 26 0L17 36z" fill="#fff" />
              <path d="M33 28c2 2.500 3 3.500 3 5a3 3 0 0 1-6 0c0-1.500 1-2.500 3-5z" fill="#b8dcff" />
            </svg>
          </div>
          <div className="h-[108px] flex items-center justify-center">
            <Svg w={32} h={36} sw={3.500}>
              <path d="M2 3a1 1 0 0 1 1-1h19l8 8v23a1 1 0 0 1-1 1H3a1 1 0 0 1-1-1z" />
              <path d="M14 16h11M14 24h11M7 16h.5M7 24h.5" />
            </Svg>
          </div>
          <div className="h-[70px] flex items-center justify-center">
            <div className="w-[36px] h-[36px] rounded-full border-[3.500px] border-[#444] flex items-center justify-center text-[23px] font-bold">?</div>
          </div>
          <div className="mt-auto h-[64px] flex items-center justify-center">
            <Settings size={38} strokeWidth={2.400} />
          </div>
        </div>
      </div>

      {/* status bar */}
      <div className="h-[63px] bg-[#f2f3f9] shrink-0 flex items-center">
        <Svg w={35} h={20} sw={2} className="ml-[37px] text-[#222]">
          <path d="M1 1v18M34 1v18" />
          <rect x="8" y="1" width="20" height="18" />
        </Svg>
        <Divider className="ml-[24px]" />
        <span className="ml-[32px] w-[191px] pt-[3px]">Page-1</span>
        <Caret className="ml-[4px]" />
        <Divider className="ml-[17px]" />
        <Svg w={24} h={24} sw={2} className="ml-[30px] text-[#222]">
          <path d="M12 1v22M1 12h22" />
        </Svg>
        <Divider className="ml-[26px]" />
        <span className="ml-[34px] w-[76px] pt-[3px] font-bold text-[#0a7cff] whitespace-nowrap">Page-1</span>
        <Divider className="ml-[34px]" />
        <Divider className="ml-[843px]" />
        <span className="ml-[17px] w-[221px] pt-[3px] whitespace-nowrap">Number of shapes: 0</span>
        <Divider className="ml-[17px]" />
        <Svg w={35} h={32} sw={2} className="ml-[23px] text-[#222]">
          <path d="M17.500 1L33 12 17.500 23 2 12z" />
          <path d="M2 20l15.500 11L33 20" />
        </Svg>
        <Caret className="ml-[9px]" />
        <Svg w={28} h={28} sw={2} className="ml-[31px] text-[#222]">
          <path d="M1 7V1h6M21 1h6v6M27 21v6h-6M7 27H1v-6" />
          <path d="M9 7h5a6 6 0 0 1 6 6v2a6 6 0 0 1-6 6H9z" />
        </Svg>
        <span className="ml-[18px] w-[60px] pt-[3px]">Focus</span>
        <Svg w={31} h={31} sw={1.800} className="ml-[24px] text-[#222]">
          <circle cx="15.500" cy="15.500" r="14.500" />
          <path d="M12 9l8 6.500-8 6.500z" />
        </Svg>
        <Divider className="ml-[25px]" />
        <Svg w={23} h={4} sw={2.500} className="ml-[20px] text-[#222]">
          <path d="M1 2h21" />
        </Svg>
        <div className="ml-[21px] w-[192px] flex items-center shrink-0">
          <div className="w-[20px] h-[10px] rounded-l-[5px] bg-[#444] shrink-0" />
          <div className="w-[24px] h-[24px] rounded-full border-[4px] border-[#444] bg-white -ml-[2px] shrink-0" />
          <div className="flex-1 h-[7px] bg-white rounded-r-[4px]" />
        </div>
        <Svg w={24} h={24} sw={2} className="ml-[21px] text-[#222]">
          <path d="M12 1v22M1 12h22" />
        </Svg>
        <span className="ml-[29px] w-[47px] pt-[3px]">48%</span>
        <Caret className="ml-[12px]" />
        <Divider className="ml-[22px]" />
        <Svg w={29} h={28} sw={2} className="ml-[25px] text-[#222]">
          <path d="M1 7V1h6M22 1h6v6M28 21v6h-6M7 27H1v-6" />
          <rect x="8" y="8" width="13" height="12" rx="1" />
        </Svg>
        <Svg w={28} h={28} sw={2} className="ml-[35px] text-[#222]">
          <rect x="1" y="1" width="26" height="26" rx="1" />
          <path d="M7 14h14M10 11l-3 3 3 3M18 11l3 3-3 3" />
        </Svg>
      </div>

      <div className="h-[2px] flex shrink-0 bg-[#111111]">
        <div className="ml-[96px] w-[575px] bg-[#aaaaaa]" />
        <div className="ml-[691px] w-[96px] bg-[#444444]" />
      </div>
    </div>
  );
}
